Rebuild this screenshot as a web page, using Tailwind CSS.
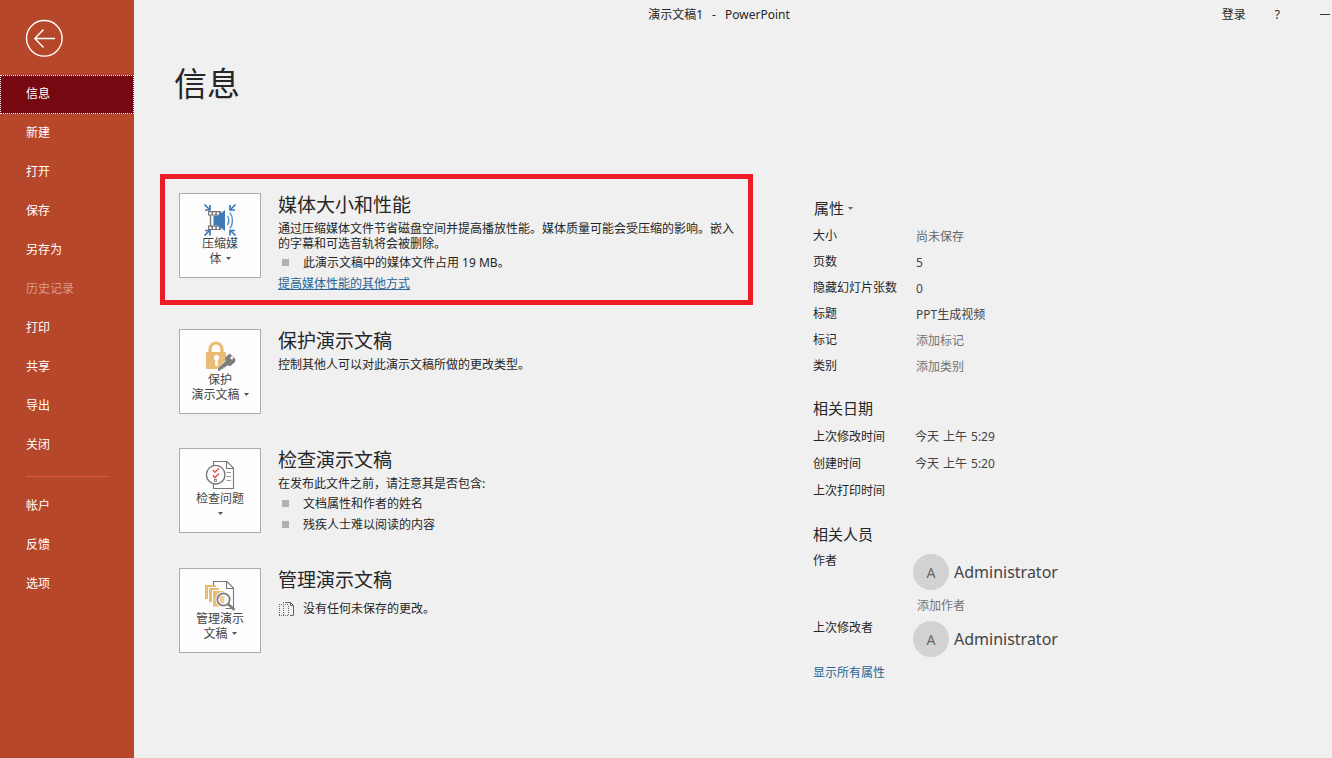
<!DOCTYPE html>
<html lang="zh-CN">
<head>
    <meta charset="UTF-8">
    <meta name="viewport" content="width=device-width, initial-scale=1.0">
    <title>演示文稿1 - PowerPoint</title>
    <script src="https://cdn.jsdelivr.net/npm/@tailwindcss/browser@4"></script>
</head>
<body class="flex min-h-screen bg-[#f0f0f0] font-['Noto_Sans','Noto_Sans_CJK_SC',sans-serif] text-[12px] leading-[15px] text-[#262626]">
    <!-- Sidebar -->
    <nav class="w-[134px] shrink-0 bg-[#b7472a] text-white">
        <button aria-label="返回" class="mt-[19px] mb-[18px] ml-[25px] block">
            <svg width="38" height="38" viewBox="0 0 38 38" fill="none" stroke="#fff" stroke-width="1.4">
                <circle cx="19.3" cy="19.3" r="17.8" />
                <path d="M30 19.5H10M18.5 10.5L9.8 19.5l8.7 9" />
            </svg>
        </button>
        <a href="#" class="flex h-[39px] items-center border border-dotted border-white bg-[#750811] pb-[2px] pl-[25px]">信息</a>
        <a href="#" class="flex h-[39px] items-center pb-[2px] pl-[26px]">新建</a>
        <a href="#" class="flex h-[39px] items-center pb-[2px] pl-[26px]">打开</a>
        <a href="#" class="flex h-[39px] items-center pb-[2px] pl-[26px]">保存</a>
        <a href="#" class="flex h-[39px] items-center pb-[2px] pl-[26px]">另存为</a>
        <a href="#" class="flex h-[39px] items-center pb-[2px] pl-[26px] text-[#da9c8c]">历史记录</a>
        <a href="#" class="flex h-[39px] items-center pb-[2px] pl-[26px]">打印</a>
        <a href="#" class="flex h-[39px] items-center pb-[2px] pl-[26px]">共享</a>
        <a href="#" class="flex h-[39px] items-center pb-[2px] pl-[26px]">导出</a>
        <a href="#" class="flex h-[39px] items-center pb-[2px] pl-[26px]">关闭</a>
        <hr class="mx-[26px] mt-[11px] mb-[10px] border-[#e0583a]">
        <a href="#" class="flex h-[39px] items-center pb-[2px] pl-[26px]">帐户</a>
        <a href="#" class="flex h-[39px] items-center pb-[2px] pl-[26px]">反馈</a>
        <a href="#" class="flex h-[39px] items-center pb-[2px] pl-[26px]">选项</a>
    </nav>

    <div class="min-w-0 flex-1">
        <!-- Title bar -->
        <header class="grid h-[29px] grid-cols-[1fr_auto_1fr] items-center pr-7">
            <div class="col-start-2 flex gap-[9px]"><span>演示文稿1</span><span>-</span><span>PowerPoint</span></div>
            <div class="-mr-7 flex items-center justify-end">
                <button>登录</button>
                <button aria-label="帮助" class="ml-[29px]">?</button>
                <button aria-label="最小化" class="ml-[38px] flex h-4 w-[14px] items-center pl-[2px]"><span class="h-px w-[10px] bg-[#333]"></span></button>
            </div>
        </header>

        <main class="pl-[26px]">
            <h1 class="mt-[31px] mb-[66px] pl-[14px] text-[33px] leading-[48px]">信息</h1>

            <div class="grid grid-cols-[minmax(0,593px)_minmax(0,1fr)] gap-x-[60px]">
                <div>
                    <!-- Media size -->
                    <section class="flex gap-[17px] border-5 border-[#ee1c25] pt-[14px] pr-[12px] pb-[6px] pl-[14px]">
                        <button class="flex h-[85px] w-[82px] shrink-0 flex-col items-center border border-[#ababab] bg-[#fdfdfd] pt-[8px] text-[#444]">
                            <svg width="34" height="34" viewBox="0 0 34 34" fill="none">
                                <path d="M5 9h13v4.500H5zM5 23.500h13V28H5z" fill="#777" />
                                <path d="M6.200 10.200h2.300v2.200H6.200zM10 10.200h2.300v2.200H10zM13.800 10.200h2.300v2.200h-2.300zM6.200 24.700h2.300v2.200H6.200zM10 24.700h2.300v2.200H10zM13.800 24.700h2.300v2.200h-2.300z" fill="#fff" />
                                <path d="M7.500 13v11" stroke="#777" stroke-width="1.400" />
                                <path d="M10.500 13.500h4.500l7-5.500v21l-7-5.500h-4.500z" fill="#3d7ab8" />
                                <path d="M24.500 14q2.800 4.500 0 9M27 10.500q5 8 0 16" stroke="#5b8fc6" stroke-width="1.400" />
                                <path d="M1.500 2.500l5 5M7 3v5H2M32.500 2.500l-5 5M27 3v5h5M1.500 33.500l5-5M7 33.500v-5H2M32.500 33.500l-5-5M27 33.500v-5h5" stroke="#3d7ab8" stroke-width="1.700" />
                            </svg>
                            <span>压缩媒</span>
                            <span class="flex items-center gap-[4px]">体<svg width="5" height="3" viewBox="0 0 5 3"><path d="M0 0h5L2.500 3z" fill="#555" /></svg></span>
                        </button>
                        <div class="min-w-0">
                            <h2 class="mb-[4px] text-[19px] leading-[24px]">媒体大小和性能</h2>
                            <p>通过压缩媒体文件节省磁盘空间并提高播放性能。媒体质量可能会受压缩的影响。嵌入的字幕和可选音轨将会被删除。</p>
                            <ul class="mt-px leading-[21px]">
                                <li class="flex items-center gap-[14px] pl-[4px]"><span class="size-[7px] bg-[#b1b1b1]"></span>此演示文稿中的媒体文件占用 19 MB。</li>
                            </ul>
                            <a href="#" class="block leading-[21px] text-[#2a6496] underline">提高媒体性能的其他方式</a>
                        </div>
                    </section>

                    <!-- Protect -->
                    <section class="mt-[24px] flex gap-[17px] pl-[19px]">
                        <button class="flex h-[85px] w-[82px] shrink-0 flex-col items-center border border-[#ababab] bg-[#fdfdfd] pt-[8px] text-[#444]">
                            <svg width="34" height="34" viewBox="0 0 34 34" fill="none">
                                <path d="M7 16v-5a6 6 0 0 1 12 0v5" stroke="#eabb72" stroke-width="3.200" />
                                <rect x="3" y="14" width="20" height="17" rx="1" fill="#eabb72" />
                                <path d="M13.500 17a2.800 2.800 0 0 1 1.300 5.200V28h-2.600v-5.800a2.800 2.800 0 0 1 1.300-5.200z" fill="#fff" />
                                <path d="M16 33l9-9" stroke="#fdfdfd" stroke-width="6" />
                                <path d="M26.500 15.500l6 5.500-.5 3-4.500 4-3.500-.5-2 2-1.500-.3-.3 1.800-1.700-.2-1.500 2H15v-2.500l7.500-7-.5-3.500z" fill="#7d7d7d" />
                                <circle cx="28.800" cy="20" r="1.400" fill="#fff" />
                            </svg>
                            <span>保护</span>
                            <span class="flex items-center gap-[4px]">演示文稿<svg width="5" height="3" viewBox="0 0 5 3"><path d="M0 0h5L2.500 3z" fill="#555" /></svg></span>
                        </button>
                        <div class="min-w-0">
                            <h2 class="mb-[4px] text-[19px] leading-[24px]">保护演示文稿</h2>
                            <p>控制其他人可以对此演示文稿所做的更改类型。</p>
                        </div>
                    </section>

                    <!-- Inspect -->
                    <section class="mt-[34px] flex gap-[17px] pl-[19px]">
                        <button class="flex h-[85px] w-[82px] shrink-0 flex-col items-center border border-[#ababab] bg-[#fdfdfd] pt-[8px] text-[#444]">
                            <svg width="34" height="34" viewBox="0 0 34 34" fill="none" stroke="#777" stroke-width="1.100">
                                <path d="M10.500 9V4.500h13.500l6.500 6.500v20.500h-20V26M23.500 4.500v7h7" />
                                <path d="M23.500 15.500h4.500M23.500 19.500h4.500M23.500 23.500h4.500" stroke="#999" />
                                <circle cx="12.700" cy="17.700" r="9.300" fill="#fdfdfd" stroke-width="1.400" />
                                <path d="M10 13l2 2.300 4-4M10 18.300l2 2.300 4-4" stroke="#e2574c" stroke-width="1.400" />
                                <rect x="11.500" y="22.500" width="2" height="2" stroke-width=".8" />
                            </svg>
                            <span>检查问题</span>
                            <span class="flex h-[15px] items-center"><svg width="5" height="3" viewBox="0 0 5 3"><path d="M0 0h5L2.500 3z" fill="#555" /></svg></span>
                        </button>
                        <div class="min-w-0">
                            <h2 class="mb-[4px] text-[19px] leading-[24px]">检查演示文稿</h2>
                            <p>在发布此文件之前，请注意其是否包含:</p>
                            <ul class="mt-[2px] leading-[21px]">
                                <li class="flex items-center gap-[14px] pl-[4px]"><span class="size-[7px] bg-[#b1b1b1]"></span>文档属性和作者的姓名</li>
                                <li class="flex items-center gap-[14px] pl-[4px]"><span class="size-[7px] bg-[#b1b1b1]"></span>残疾人士难以阅读的内容</li>
                            </ul>
                        </div>
                    </section>

                    <!-- Manage -->
                    <section class="mt-[33px] flex gap-[17px] pl-[19px]">
                        <button class="flex h-[85px] w-[82px] shrink-0 flex-col items-center border border-[#ababab] bg-[#fdfdfd] pt-[8px] text-[#444]">
                            <svg width="34" height="34" viewBox="0 0 34 34" fill="none">
                                <path d="M10.500 9V4.500h13.500l6.500 6.500v20.500h-8M23.500 4.500v7h7" stroke="#777" stroke-width="1.100" />
                                <path d="M2 8h11v14H2z" fill="#eabb72" />
                                <path d="M5.500 10.500h11v15h-11z" fill="#eabb72" stroke="#fdfdfd" />
                                <path d="M9.500 13.500h12v16.500h-12z" fill="#eabb72" stroke="#fdfdfd" />
                                <circle cx="20.500" cy="22.500" r="6.500" fill="#fdfdfd" stroke="#fdfdfd" stroke-width="3" />
                                <path d="M16 19h5.500v7.500H17z" fill="#f0cf9c" />
                                <circle cx="20.500" cy="22.500" r="6.200" stroke="#7d7d7d" stroke-width="1.800" />
                                <path d="M25 27l6.500 6" stroke="#7d7d7d" stroke-width="2.600" />
                            </svg>
                            <span>管理演示</span>
                            <span class="flex items-center gap-[4px]">文稿<svg width="5" height="3" viewBox="0 0 5 3"><path d="M0 0h5L2.500 3z" fill="#555" /></svg></span>
                        </button>
                        <div class="min-w-0">
                            <h2 class="mb-[4px] text-[19px] leading-[24px]">管理演示文稿</h2>
                            <p class="mt-[6px] flex items-center gap-[8px] pl-px leading-[21px]">
                                <svg width="16" height="16" viewBox="0 0 16 16" fill="none" stroke="#666">
                                    <path d="M6 1.500h5.500l3 3v10H11M11.500 1.500v3h3" />
                                    <path d="M0 3.500h10M0 14.500h10M.5 5v9M4.500 1v13M9.500 5v9" stroke-dasharray="1 1" />
                                </svg>
                                没有任何未保存的更改。
                            </p>
                        </div>
                    </section>
                </div>

                <!-- Properties -->
                <aside class="pt-[22px]">
                    <button class="flex items-center gap-[4px] pl-px text-[15px] leading-[24px]">属性<svg width="5" height="3" viewBox="0 0 5 3"><path d="M0 0h5L2.500 3z" fill="#666" /></svg></button>
                    <div class="mt-[2px] grid auto-rows-[26px] grid-cols-[100px_minmax(0,1fr)] items-center">
                        <span>大小</span><span class="pt-[3px] pl-[3px] text-[#666]">尚未保存</span>
                        <span>页数</span><span class="pt-[3px] pl-[3px] text-[#444]">5</span>
                        <span>隐藏幻灯片张数</span><span class="pt-[3px] pl-[3px] text-[#444]">0</span>
                        <label for="title">标题</label><input id="title" type="text" value="PPT生成视频" class="w-full pt-[3px] pl-[3px] text-[#444]">
                        <label for="tags">标记</label><input id="tags" type="text" placeholder="添加标记" class="w-full pt-[3px] pl-[3px] placeholder:text-[#737373]">
                        <label for="category">类别</label><input id="category" type="text" placeholder="添加类别" class="w-full pt-[3px] pl-[3px] placeholder:text-[#737373]">
                    </div>

                    <h3 class="mt-[18px] text-[15px] leading-[24px]">相关日期</h3>
                    <div class="mt-[3px] grid auto-rows-[27px] grid-cols-[100px_minmax(0,1fr)] items-center">
                        <span>上次修改时间</span><span class="flex gap-[4px] pl-[2px] text-[#444]"><span>今天</span><span>上午</span><span>5:29</span></span>
                        <span>创建时间</span><span class="flex gap-[4px] pl-[2px] text-[#444]"><span>今天</span><span>上午</span><span>5:20</span></span>
                        <span>上次打印时间</span>
                    </div>

                    <h3 class="mt-[18px] text-[15px] leading-[24px]">相关人员</h3>
                    <div class="mt-[2px] grid grid-cols-[100px_minmax(0,1fr)]">
                        <span class="leading-[26px]">作者</span>
                        <div class="pt-[6px]">
                            <div class="flex items-center gap-[5px] text-[16px] text-[#444]">
                                <span class="flex size-9 items-center justify-center rounded-full bg-[#d2d2d2] text-[14px] text-[#666]">A</span>Administrator
                            </div>
                            <input type="text" aria-label="添加作者" placeholder="添加作者" class="block h-[25px] w-full pt-[6px] pl-[4px] placeholder:text-[#737373]">
                        </div>
                        <span class="leading-[26px]">上次修改者</span>
                        <div class="flex items-center gap-[5px] pt-[6px] text-[16px] text-[#444]">
                            <span class="flex size-9 items-center justify-center rounded-full bg-[#d2d2d2] text-[14px] text-[#666]">A</span>Administrator
                        </div>
                    </div>
                    <a href="#" class="mt-[5px] inline-block leading-[21px] text-[#2a6496]">显示所有属性</a>
                </aside>
            </div>
        </main>
    </div>
</body>
</html>
